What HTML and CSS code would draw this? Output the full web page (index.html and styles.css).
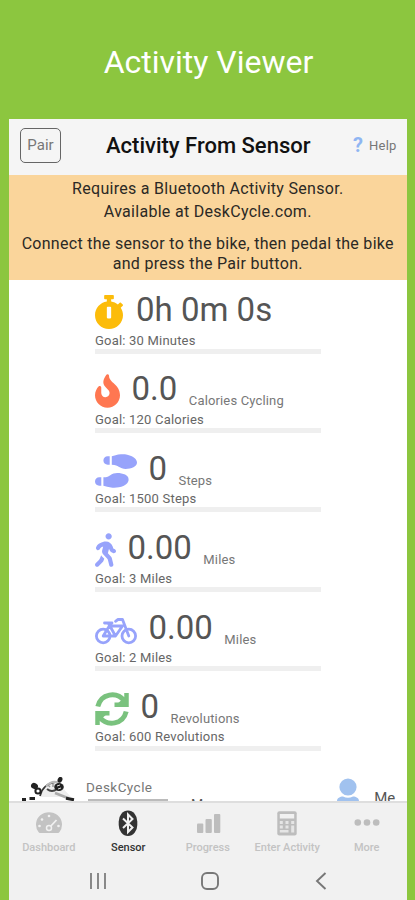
FILE: index.html
```html
<!DOCTYPE html>
<html lang="en">
<head>
<meta charset="utf-8">
<title>Activity Viewer</title>
<link rel="stylesheet" href="styles.css">
</head>
<body>
<h1 class="promo">Activity Viewer</h1>
<main class="phone">
  <header class="header">
    <button class="pair">Pair</button>
    <h2 class="title">Activity From Sensor</h2>
    <div class="help"><span class="mark">?</span><span class="help-text">Help</span></div>
  </header>
  <section class="notice">
    <p class="intro">Requires a Bluetooth Activity Sensor.<br>Available at DeskCycle.com.</p>
    <p class="steps">Connect the sensor to the bike, then pedal the bike<br>and press the Pair button.</p>
  </section>
  <section class="metrics">
    <article class="metric">
      <div class="reading">
        <svg class="icon" width="28" height="34" viewBox="16 0 416 512" preserveAspectRatio="none" fill="#fcbc0a"><path d="M432 304c0 114.900-93.100 208-208 208S16 418.900 16 304c0-104 76.300-190.200 176-205.500V64h-28c-6.600 0-12-5.400-12-12V12c0-6.600 5.400-12 12-12h120c6.600 0 12 5.400 12 12v40c0 6.600-5.400 12-12 12h-28v34.500c37.500 5.800 71.700 21.600 99.700 44.600l27.500-27.500c4.700-4.700 12.300-4.700 17 0l28.300 28.300c4.700 4.700 4.700 12.300 0 17l-30 30C419.700 223.300 432 262.200 432 304zm-176 36V188.500c0-6.600-5.400-12-12-12h-40c-6.600 0-12 5.400-12 12V340c0 6.600 5.400 12 12 12h40c6.600 0 12-5.400 12-12z"/></svg>
        <span class="value time">0h 0m 0s</span>
      </div>
      <div class="goal">Goal: 30 Minutes</div>
      <div class="bar"></div>
    </article>
    <article class="metric">
      <div class="reading">
        <svg class="icon" width="25" height="34" viewBox="0 0 384 512" fill="#ff7751"><path d="M216 23.860c0-23.800-30.650-32.770-44.150-13.040C48 191.850 224 200 224 288c0 35.630-29.110 64.460-64.850 63.990-35.170-.45-63.150-29.770-63.150-64.940v-85.510c0-21.700-26.470-32.230-41.430-16.500C27.800 213.160 0 261.330 0 320c0 105.870 86.130 192 192 192s192-86.130 192-192c0-170.290-168-193-168-296.140z"/></svg>
        <span class="value">0.0</span><span class="unit">Calories Cycling</span>
      </div>
      <div class="goal">Goal: 120 Calories</div>
      <div class="bar"></div>
    </article>
    <article class="metric">
      <div class="reading">
        <svg class="icon" width="42" height="34" viewBox="0 0 640 512" fill="#97a3fb"><path d="M192 160h32V32h-32c-35.350 0-64 28.650-64 64s28.650 64 64 64zM0 416c0 35.350 28.650 64 64 64h32V352H64c-35.350 0-64 28.650-64 64zm337.460-128c-34.910 0-76.160 13.120-104.730 32-24.790 16.380-44.520 32-104.730 32v128l57.530 15.970c26.210 7.280 53.010 13.120 80.310 15.050 32.690 2.310 65.600.67 97.580-6.200C472.900 481.300 512 429.220 512 384c0-64-84.180-96-174.540-96zM491.420 7.250C459.440.38 426.530-1.260 393.840 1.050c-27.300 1.930-54.100 7.770-80.310 15.040L256 32v128c60.200 0 79.940 15.620 104.730 32 28.570 18.880 69.820 32 104.730 32C555.820 224 640 192 640 128c0-45.220-39.100-97.300-148.580-120.750z"/></svg>
        <span class="value">0</span><span class="unit">Steps</span>
      </div>
      <div class="goal">Goal: 1500 Steps</div>
      <div class="bar"></div>
    </article>
    <article class="metric">
      <div class="reading">
        <svg class="icon" width="21" height="34" viewBox="0 0 320 512" fill="#97a3fb"><path d="M208 96c26.500 0 48-21.500 48-48S234.500 0 208 0s-48 21.500-48 48 21.500 48 48 48zm94.500 149.100l-23.300-11.800-9.700-29.400c-14.700-44.600-55.700-75.800-102.200-75.900-36-.1-55.900 10.100-93.300 25.200-21.600 8.700-39.300 25.200-49.700 46.200L17.600 213c-7.800 15.800-1.500 35 14.200 42.900 15.600 7.900 34.600 1.500 42.500-14.300L81 228c3.500-7 9.300-12.500 16.500-15.400l26.800-10.800-15.200 60.700c-5.200 20.800.4 42.900 14.900 58.800l59.900 65.400c7.200 7.900 12.300 17.400 14.900 27.700l18.300 73.300c4.300 17.100 21.700 27.600 38.800 23.300 17.100-4.300 27.600-21.700 23.300-38.800l-22.200-89c-2.600-10.300-7.700-19.900-14.900-27.700l-45.500-49.700 17.200-68.700 5.500 16.500c5.300 16.100 16.700 29.400 31.700 37l23.300 11.800c15.600 7.900 34.600 1.500 42.500-14.300 7.700-15.700 1.400-35.100-14.300-43zM73.600 385.800c-3.200 8.100-8 15.400-14.200 21.500l-50 50.100c-12.500 12.500-12.500 32.800 0 45.300s32.700 12.500 45.200 0l59.400-59.400c6.100-6.100 10.900-13.400 14.200-21.500l13.500-33.800c-55.300-60.300-38.700-41.800-47.400-53.700l-20.700 51.500z"/></svg>
        <span class="value">0.00</span><span class="unit">Miles</span>
      </div>
      <div class="goal">Goal: 3 Miles</div>
      <div class="bar"></div>
    </article>
    <article class="metric">
      <div class="reading">
        <svg class="icon" width="42" height="34" viewBox="0 -1.500 42 34" fill="none" stroke="#97a3fb" stroke-width="2.800" stroke-linecap="round" stroke-linejoin="round"><circle cx="8.200" cy="21.500" r="6.800"/><circle cx="33.800" cy="21.500" r="6.800"/><path d="M8.200 21.500L14.300 11.500H27.500L20.500 21.500H8.200M20.500 21.500L13.500 9M9.500 8.500h7.500M20.500 6.800L23 5h4.500L33.800 21.500"/></svg>
        <span class="value">0.00</span><span class="unit">Miles</span>
      </div>
      <div class="goal">Goal: 2 Miles</div>
      <div class="bar"></div>
    </article>
    <article class="metric">
      <div class="reading">
        <svg class="icon" width="34" height="34" viewBox="0 0 34 34" fill="none" stroke="#7ac27e" stroke-width="5"><path d="M2.800 14.500C6 1.500 21.500-1 29.500 9M31.200 19.500C28 32.500 12.500 35 4.500 25"/><path d="M31.500 1v11.800H19.500M2.500 33V21.200H14.500" stroke-width="4.500"/><path d="M21 13L31 4v9zM13 21L3 30v-9z" fill="#7ac27e" stroke="none"/></svg>
        <span class="value">0</span><span class="unit">Revolutions</span>
      </div>
      <div class="goal">Goal: 600 Revolutions</div>
      <div class="bar"></div>
    </article>
  </section>
  <section class="peek">
    <svg class="logo" width="56" height="26" viewBox="0 0 56 26" fill="none"><path d="M20 18L24 10Q31 3 38 7L50 20H20z" fill="#eee"/><path d="M14 9L20 17M19 19C21 11 27 6 35 5" stroke="#333" stroke-width="1.700"/><path d="M25 9.500C29 5 34 4 38 6" stroke="#bbb" stroke-width="2"/><ellipse cx="13.500" cy="9" rx="3.600" ry="3" fill="#222" transform="rotate(30 13.500 9)"/><circle cx="17" cy="14" r="2.600" fill="#fff" stroke="#222" stroke-width="2"/><path d="M27 8l2 2M32 7v3" stroke="#999" stroke-width="1.500"/><path d="M26 12q5 4 10 0" stroke="#444" stroke-width="2"/><ellipse cx="38" cy="10" rx="4.800" ry="4" fill="#222"/><path d="M36 9l3-1M37 12l3-1" stroke="#ddd"/><ellipse cx="39" cy="2.800" rx="2.300" ry="3" fill="#222" transform="rotate(25 39 2.800)"/><path d="M34 16l14 5.500" stroke="#aaa" stroke-width="2.500"/><path d="M1 22.500h4M8.500 21.500h5.500M45 21.300l8 1.500" stroke="#222" stroke-width="3"/></svg>
    <div class="device"><span>DeskCycle</span><i></i></div>
    <span class="cut">M</span>
    <svg class="person" width="22" height="30" viewBox="0 0 22 30" fill="#a1c2ef"><circle cx="11" cy="9" r="8.600"/><path d="M0 23c0-3 3-4.500 6-4.500q5 2.500 10 0c3 0 6 1.500 6 4.500v7H0z"/></svg>
    <span class="me">Me</span>
  </section>
  <nav class="tabs">
    <div class="tab"><svg width="28" height="28" viewBox="0 0 28 28"><path d="M3.500 23A13 12.500 0 1 1 24.500 23Q24 24 23 24H5Q4 24 3.500 23z" fill="#c3c3c3"/><g fill="#f1f1f1"><circle cx="4.500" cy="17" r="1.300"/><circle cx="7" cy="10.500" r="1.300"/><circle cx="14" cy="7" r="1.300"/><circle cx="23.500" cy="17" r="1.300"/></g><path d="M14 19L21.500 11" stroke="#f1f1f1" stroke-width="1.800"/><circle cx="14" cy="19" r="2.500" fill="#c3c3c3" stroke="#f1f1f1" stroke-width="1.500"/></svg><span>Dashboard</span></div>
    <div class="tab active"><svg width="28" height="28" viewBox="0 0 28 28"><rect x="4.700" y="1.500" width="18.600" height="25.500" rx="9.300" ry="11" fill="#333"/><path d="M9 9.500L18.500 18.500L14 23V5.500L18.500 10L9 19" fill="none" stroke="#f1f1f1" stroke-width="2"/></svg><span>Sensor</span></div>
    <div class="tab"><svg width="28" height="28" viewBox="0 0 28 28" fill="#bdbdbd"><rect x="3" y="14.500" width="6.300" height="9.500" rx="1"/><rect x="11.500" y="10" width="6.300" height="14" rx="1"/><rect x="20" y="5" width="6.300" height="19" rx="1"/></svg><span>Progress</span></div>
    <div class="tab"><svg width="28" height="28" viewBox="0 0 28 28"><rect x="4.300" y="2.300" width="19.400" height="24.200" rx="2" fill="#bdbdbd"/><path d="M6.800 5h14.400v4.500H6.800z" fill="#f1f1f1"/><path d="M6.800 12h3v3h-3zm5.700 0h3v3h-3zm5.700 0h3v3h-3zM6.800 16.500h3v3h-3zm5.700 0h3v3h-3zm5.700 0h3v7h-3zM6.800 21h8.700v2.500H6.800z" fill="#e5e5e5"/></svg><span>Enter Activity</span></div>
    <div class="tab"><svg width="28" height="28" viewBox="0 0 28 28" fill="#bdbdbd"><circle cx="4.800" cy="13.500" r="3.300"/><circle cx="14" cy="13.500" r="3.300"/><circle cx="23.200" cy="13.500" r="3.300"/></svg><span>More</span></div>
  </nav>
  <div class="system">
    <svg width="18" height="18" viewBox="0 0 18 18" stroke="#777" stroke-width="1.700"><path d="M2 1v16M9 1v16M16 1v16"/></svg>
    <svg width="18" height="18" viewBox="0 0 18 18" fill="none" stroke="#777" stroke-width="1.900"><rect x="1" y="1" width="16" height="16" rx="5"/></svg>
    <svg width="18" height="18" viewBox="0 0 18 18" fill="none" stroke="#777" stroke-width="1.900"><path d="M12.500 1L4 9l8.500 8"/></svg>
  </div>
</main>
</body>
</html>
```
FILE: styles.css
```css
* { box-sizing: border-box; }
body {
  margin: 0;
  height: 900px;
  overflow: hidden;
  background: #8cc63f;
  font-family: Roboto, sans-serif;
  color: #555;
}
h1, h2, p { margin: 0; }
svg { display: block; flex: none; }
.promo {
  height: 119px;
  padding: 43px 0 0 2px;
  text-align: center;
  font-size: 32px;
  line-height: 38px;
  font-weight: 400;
  color: #fff;
}
.phone {
  width: 397.500px;
  height: 781px;
  margin-left: 9px;
  background: #fff;
  display: flex;
  flex-direction: column;
}
.header {
  height: 56px;
  flex: none;
  background: #f5f5f5;
  display: grid;
  grid-template-columns: 82px 1fr 82px;
  align-items: center;
  padding: 0 10px 4px 11px;
}
.pair {
  width: 41px;
  height: 35px;
  border: 1.300px solid #666;
  border-radius: 5px;
  background: none;
  padding: 0;
  font: 15px Roboto, sans-serif;
  color: #777;
}
.title {
  text-align: center;
  font-size: 22px;
  font-weight: 500;
  color: #111;
  white-space: nowrap;
}
.help {
  display: flex;
  justify-content: flex-end;
  align-items: center;
  gap: 6px;
}
.mark { font-size: 20px; font-weight: 700; color: #8fb5f2; }
.help-text { font-size: 13px; color: #777; letter-spacing: .2px; }
.notice {
  height: 105px;
  flex: none;
  background: #fad59b;
  text-align: center;
  font-size: 16px;
  letter-spacing: .29px;
  color: #2b2925;
  padding-top: 2px;
  white-space: nowrap;
}
.intro { line-height: 23px; }
.steps { line-height: 20px; padding-top: 11px; }
.metrics {
  width: 226px;
  margin-left: 86px;
  padding-top: 15px;
  height: 475px;
  flex: none;
}
.metric { height: 79.400px; }
.reading {
  height: 35px;
  display: flex;
  white-space: nowrap;
}
.value {
  font-size: 33px;
  line-height: 36px;
  margin: -3px 0 0 11.500px;
  color: #555;
}
.time { margin-left: 13px; }
.unit {
  font-size: 13px;
  line-height: 16px;
  letter-spacing: .15px;
  margin: 19px 0 0 11.500px;
  color: #777;
}
.goal {
  font-size: 13px;
  line-height: 16px;
  letter-spacing: .2px;
  padding-top: 2.500px;
  height: 18.700px;
  color: #666;
}
.bar { height: 5px; background: #efefef; }
.peek {
  height: 30px;
  margin-top: auto;
  flex: none;
  overflow: hidden;
  display: flex;
  padding-left: 12px;
}
.logo { margin-top: 6px; }
.device {
  width: 84px;
  margin-left: 9px;
  font-size: 13.500px;
  letter-spacing: .45px;
  line-height: 16px;
  padding-top: 8px;
  color: #777;
}
.device i {
  display: block;
  width: 80px;
  height: 4px;
  margin: 3.500px 0 0 2px;
  background: #bbb;
}
.cut { margin: 26px 0 0 21px; font-size: 14px; line-height: 16px; }
.person { margin: 7px 0 0 134px; }
.me { margin: 18px 0 0 15px; font-size: 15px; line-height: 18px; }
.tabs {
  height: 58px;
  flex: none;
  display: grid;
  grid-template-columns: repeat(5, 1fr);
  background: #f1f1f1;
  border-top: 2px solid #dedede;
}
.tab {
  display: flex;
  flex-direction: column;
  align-items: center;
  padding-top: 6px;
  font-size: 11px;
  line-height: 14px;
  font-weight: 500;
  color: #c3c3c3;
  gap: 4px;
  white-space: nowrap;
}
.active { color: #333; }
.system {
  height: 41px;
  flex: none;
  background: #f1f1f1;
  display: flex;
  gap: 94px;
  padding: 13px 0 0 80px;
}
```
